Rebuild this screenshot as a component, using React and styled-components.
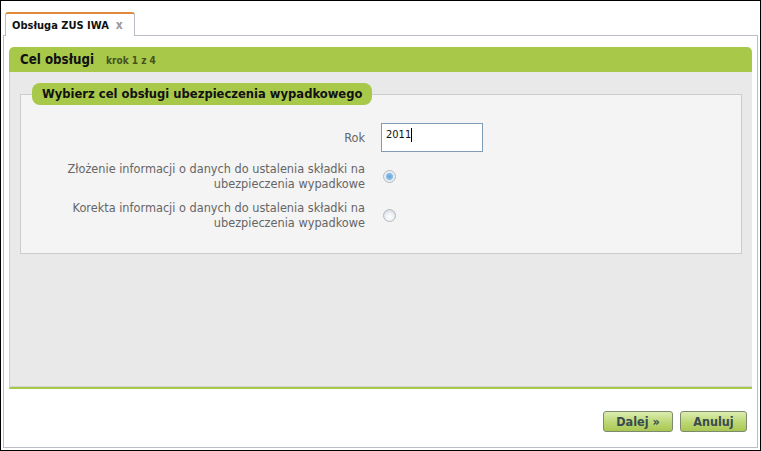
import React from 'react'
import styled, { createGlobalStyle } from 'styled-components'

const Global = createGlobalStyle`
    html, body {
        margin: 0;
        padding: 0;
        background: #fff;
    }
    body {
        font-family: "DejaVu Sans Condensed", "DejaVu Sans", sans-serif;
    }
`

const green = '#a8c84a'

const Frame = styled.div`
    box-sizing: border-box;
    width: 761px;
    height: 451px;
    border: 1px solid #000;
    background: #fff;
    display: flex;
    flex-direction: column;
`

const TabStrip = styled.div`
    display: flex;
    padding: 11px 0 0 4px;
    position: relative;
    z-index: 1;
`

const Tab = styled.div`
    box-sizing: border-box;
    height: 24px;
    width: 130px;
    margin-bottom: -1px;
    border: 1px solid #b9bec6;
    border-top: 2px solid #e08a3c;
    border-bottom: none;
    border-radius: 3px 3px 0 0;
    background: #fff;
    display: flex;
    align-items: center;
    padding-left: 6px;
    gap: 7px;
    font-size: 11px;
    font-weight: bold;
    color: #111;
`

const Close = styled.span`
    color: #999;
    font-size: 12px;
    font-weight: bold;
`

const Content = styled.div`
    flex: 1;
    margin: 0 2px 2px 2px;
    border: 1px solid #b9bec6;
    display: flex;
    flex-direction: column;
    padding: 11px 5px 0 5px;
`

const Panel = styled.div`
    display: flex;
    flex-direction: column;
`

const PanelHeader = styled.div`
    height: 25px;
    background: ${green};
    border-radius: 5px 5px 0 0;
    display: flex;
    align-items: center;
    padding-left: 11px;
    gap: 12px;
`

const Title = styled.span`
    font-size: 13.2px;
    font-weight: bold;
    color: #111;
`

const Step = styled.span`
    font-size: 10px;
    font-weight: bold;
    color: #45521e;
    padding-top: 2px;
`

const PanelBody = styled.div`
    height: 317px;
    box-sizing: border-box;
    background: #e9e9e9;
    border-left: 1px solid #cfcfcf;
    border-bottom: 2px solid ${green};
    box-shadow: 0 -1px 0 #d4d4d4 inset;
    padding: 11px 10px 0 10px;
`

const Fieldset = styled.fieldset`
    margin: 0;
    padding: 0 0 23px 0;
    border: 1px solid #cccccc;
    background: #f4f4f4;
    display: grid;
    grid-template-columns: 344px 1fr;
    column-gap: 16px;
    row-gap: 9px;
    align-items: center;
`

const Legend = styled.legend`
    margin-left: 11px;
    padding: 0 10px;
    height: 22px;
    line-height: 22px;
    border-radius: 8px;
    background: ${green};
    font-size: 12.85px;
    font-weight: bold;
    color: #111;
`

const Label = styled.div`
    text-align: right;
    font-size: 12.6px;
    line-height: 15px;
    color: #666;
`

const Field = styled.div`
    display: flex;
    align-items: center;
`

const Input = styled.div`
    box-sizing: border-box;
    width: 102px;
    height: 29px;
    border: 1px solid #7f9db9;
    background: #fff;
    padding: 4px 4px;
    font-size: 11px;
    line-height: 14px;
    color: #111;
    display: flex;
    align-items: flex-start;
`

const Caret = styled.span`
    display: inline-block;
    width: 1px;
    height: 14px;
    background: #000;
`

const Radio = styled.span`
    box-sizing: border-box;
    width: 13px;
    height: 13px;
    margin-left: 2px;
    border-radius: 50%;
    border: 1px solid #b4b9c0;
    background: ${p => p.checked
        ? 'radial-gradient(circle, #6aa3d8 0, #8cbbe6 3px, #dfe9f3 4px, #f8f8f8 6px)'
        : 'radial-gradient(circle at 50% 65%, #fff 0, #eef1f5 4px, #dde2e9 6px)'};
`

const Footer = styled.div`
    display: flex;
    justify-content: flex-end;
    gap: 7px;
    padding: 22px 5px 0 0;
`

const Button = styled.button`
    box-sizing: border-box;
    height: 21px;
    width: ${p => p.w}px;
    border: 1px solid #7d8a6e;
    border-radius: 3px;
    background: linear-gradient(#dcecb0, #bcd774 55%, #a9c753);
    font-family: inherit;
    font-size: 12.5px;
    font-weight: bold;
    color: #394a50;
    padding: 0;
`

const options = [
    ['Złożenie informacji o danych do ustalenia składki na', 'ubezpieczenia wypadkowe', true],
    ['Korekta informacji o danych do ustalenia składki na', 'ubezpieczenia wypadkowe', false],
]

export default function App() {
    return (
        <Frame>
            <Global />
            <TabStrip>
                <Tab>
                    Obsługa ZUS IWA <Close>x</Close>
                </Tab>
            </TabStrip>
            <Content>
                <Panel>
                    <PanelHeader>
                        <Title>Cel obsługi</Title>
                        <Step>krok 1 z 4</Step>
                    </PanelHeader>
                    <PanelBody>
                        <Fieldset>
                            <Legend>Wybierz cel obsługi ubezpieczenia wypadkowego</Legend>
                            <Label style={{ marginTop: 18 }}>Rok</Label>
                            <Field style={{ marginTop: 18 }}>
                                <Input>2011<Caret /></Input>
                            </Field>
                            {options.map(([a, b, checked]) => (
                                <React.Fragment key={a}>
                                    <Label>{a}<br />{b}</Label>
                                    <Field>
                                        <Radio checked={checked} />
                                    </Field>
                                </React.Fragment>
                            ))}
                        </Fieldset>
                    </PanelBody>
                </Panel>
                <Footer>
                    <Button w={70}>Dalej »</Button>
                    <Button w={67}>Anuluj</Button>
                </Footer>
            </Content>
        </Frame>
    )
}
